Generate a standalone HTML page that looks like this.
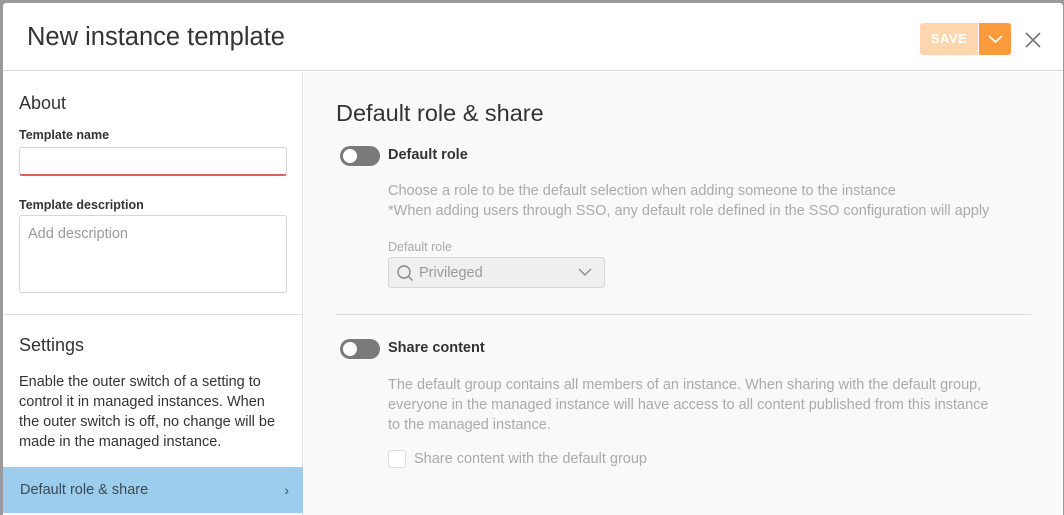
<!DOCTYPE html>
<html><head><style>
*{box-sizing:border-box;margin:0;padding:0}
html,body{width:1064px;height:515px;overflow:hidden}
body{background:#9a9a9a;font-family:"Liberation Sans",sans-serif;position:relative}
.dlg{position:absolute;left:3px;top:3px;width:1060px;height:512px;background:#fff;border-radius:3px 3px 0 0;overflow:hidden}
.hdr{height:68px;border-bottom:1px solid #d8d8d8;position:relative}
.title{position:absolute;left:24px;top:20px;font-size:25.5px;color:#333}
.save{position:absolute;left:917px;top:20px;width:58px;height:32px;background:#fdd5ae;color:#fff;font-size:13px;font-weight:bold;letter-spacing:.5px;text-align:center;line-height:32px;border-radius:3px 0 0 3px}
.dd{position:absolute;left:975px;top:20px;width:33px;height:32px;background:#fd9a3b;border-radius:0 3px 3px 0;border-left:1px solid #fff}
.x{position:absolute;left:1021px;top:28px}
.left{position:absolute;left:0;top:69px;width:300px;height:460px;background:#fff;border-right:1px solid #e0e0e0}
.right{position:absolute;left:301px;top:69px;width:759px;height:460px;background:#f9f9f9}
.h2{font-size:18px;color:#333}
.lbl{font-size:12.5px;font-weight:bold;color:#333}
.in{position:absolute;left:16px;width:268px;border:1px solid #d6d6d6;border-radius:3px;background:#fff}
.sel{position:absolute;left:0;top:395px;width:300px;height:46px;background:#9ccdec;color:#3a4a55;font-size:14.5px;line-height:46px;padding-left:17px}
.tog{position:absolute;width:40px;height:20px;border-radius:10px;background:#7a7a7a}
.tog::after{content:"";position:absolute;left:3px;top:3px;width:14px;height:14px;border-radius:50%;background:#fff}
.t{position:absolute;font-size:14.5px;color:#aaa;line-height:20px}
</style></head><body>
<div class="dlg">
<div class="hdr">
<div class="title">New instance template</div>
<div class="save">SAVE</div>
<div class="dd"><svg width="33" height="32"><path d="M10 13 L16.5 19 L23 13" stroke="#fff" stroke-width="1.6" fill="none"/></svg></div>
<svg class="x" width="18" height="18"><path d="M2 2L16 16M16 2L2 16" stroke="#777" stroke-width="1.6"/></svg>
</div>
<div class="left">
<div class="h2" style="position:absolute;left:16px;top:21px">About</div>
<div class="lbl" style="position:absolute;left:16px;top:56px">Template name</div>
<div class="in" style="top:75px;height:29px;border-bottom:2px solid #d9635a"></div>
<div class="lbl" style="position:absolute;left:16px;top:126px">Template description</div>
<div class="in" style="top:143px;height:78px;padding:10px 8px;font-size:14.5px;color:#999">Add description</div>
<div style="position:absolute;left:0;top:242px;width:300px;border-top:1px solid #e0e0e0"></div>
<div class="h2" style="position:absolute;left:16px;top:263px">Settings</div>
<div style="position:absolute;left:16px;top:300px;width:264px;font-size:14.5px;line-height:20px;color:#333">Enable the outer switch of a setting to control it in managed instances. When the outer switch is off, no change will be made in the managed instance.</div>
<div class="sel">Default role &amp; share<span style="position:absolute;right:14px;font-size:14px">›</span></div>
</div>
<div class="right">
<div style="position:absolute;left:32px;top:28px;font-size:23.5px;color:#333">Default role &amp; share</div>
<div class="tog" style="left:36px;top:74px"></div>
<div class="lbl" style="position:absolute;left:84px;top:75px;font-size:14.5px">Default role</div>
<div class="t" style="left:84px;top:109px">Choose a role to be the default selection when adding someone to the instance<br>*When adding users through SSO, any default role defined in the SSO configuration will apply</div>
<div class="t" style="left:84px;top:165px;font-size:12.5px">Default role</div>
<div style="position:absolute;left:84px;top:185px;width:217px;height:31px;border:1px solid #d6d6d6;border-radius:3px;background:#efefef">
<svg style="position:absolute;left:7px;top:6px" width="18" height="18"><circle cx="8" cy="8" r="6" stroke="#888" stroke-width="1.4" fill="none"/><path d="M12.5 12.5L16.5 16.5" stroke="#888" stroke-width="1.4"/></svg>
<span style="position:absolute;left:30px;top:7px;font-size:14.5px;color:#999">Privileged</span>
<svg style="position:absolute;left:189px;top:9px" width="14" height="10"><path d="M1 2L7 8L13 2" stroke="#888" stroke-width="1.3" fill="none"/></svg>
</div>
<div style="position:absolute;left:32px;top:242px;width:695px;border-top:1px solid #ddd"></div>
<div class="tog" style="left:36px;top:267px"></div>
<div class="lbl" style="position:absolute;left:84px;top:268px;font-size:14.5px">Share content</div>
<div class="t" style="left:84px;top:303px;width:605px">The default group contains all members of an instance. When sharing with the default group, everyone in the managed instance will have access to all content published from this instance to the managed instance.</div>
<div style="position:absolute;left:84px;top:378px;width:18px;height:18px;border:1px solid #ddd;border-radius:3px;background:#fff"></div>
<div class="t" style="left:110px;top:377px">Share content with the default group</div>
</div>
</div>
</body></html>
